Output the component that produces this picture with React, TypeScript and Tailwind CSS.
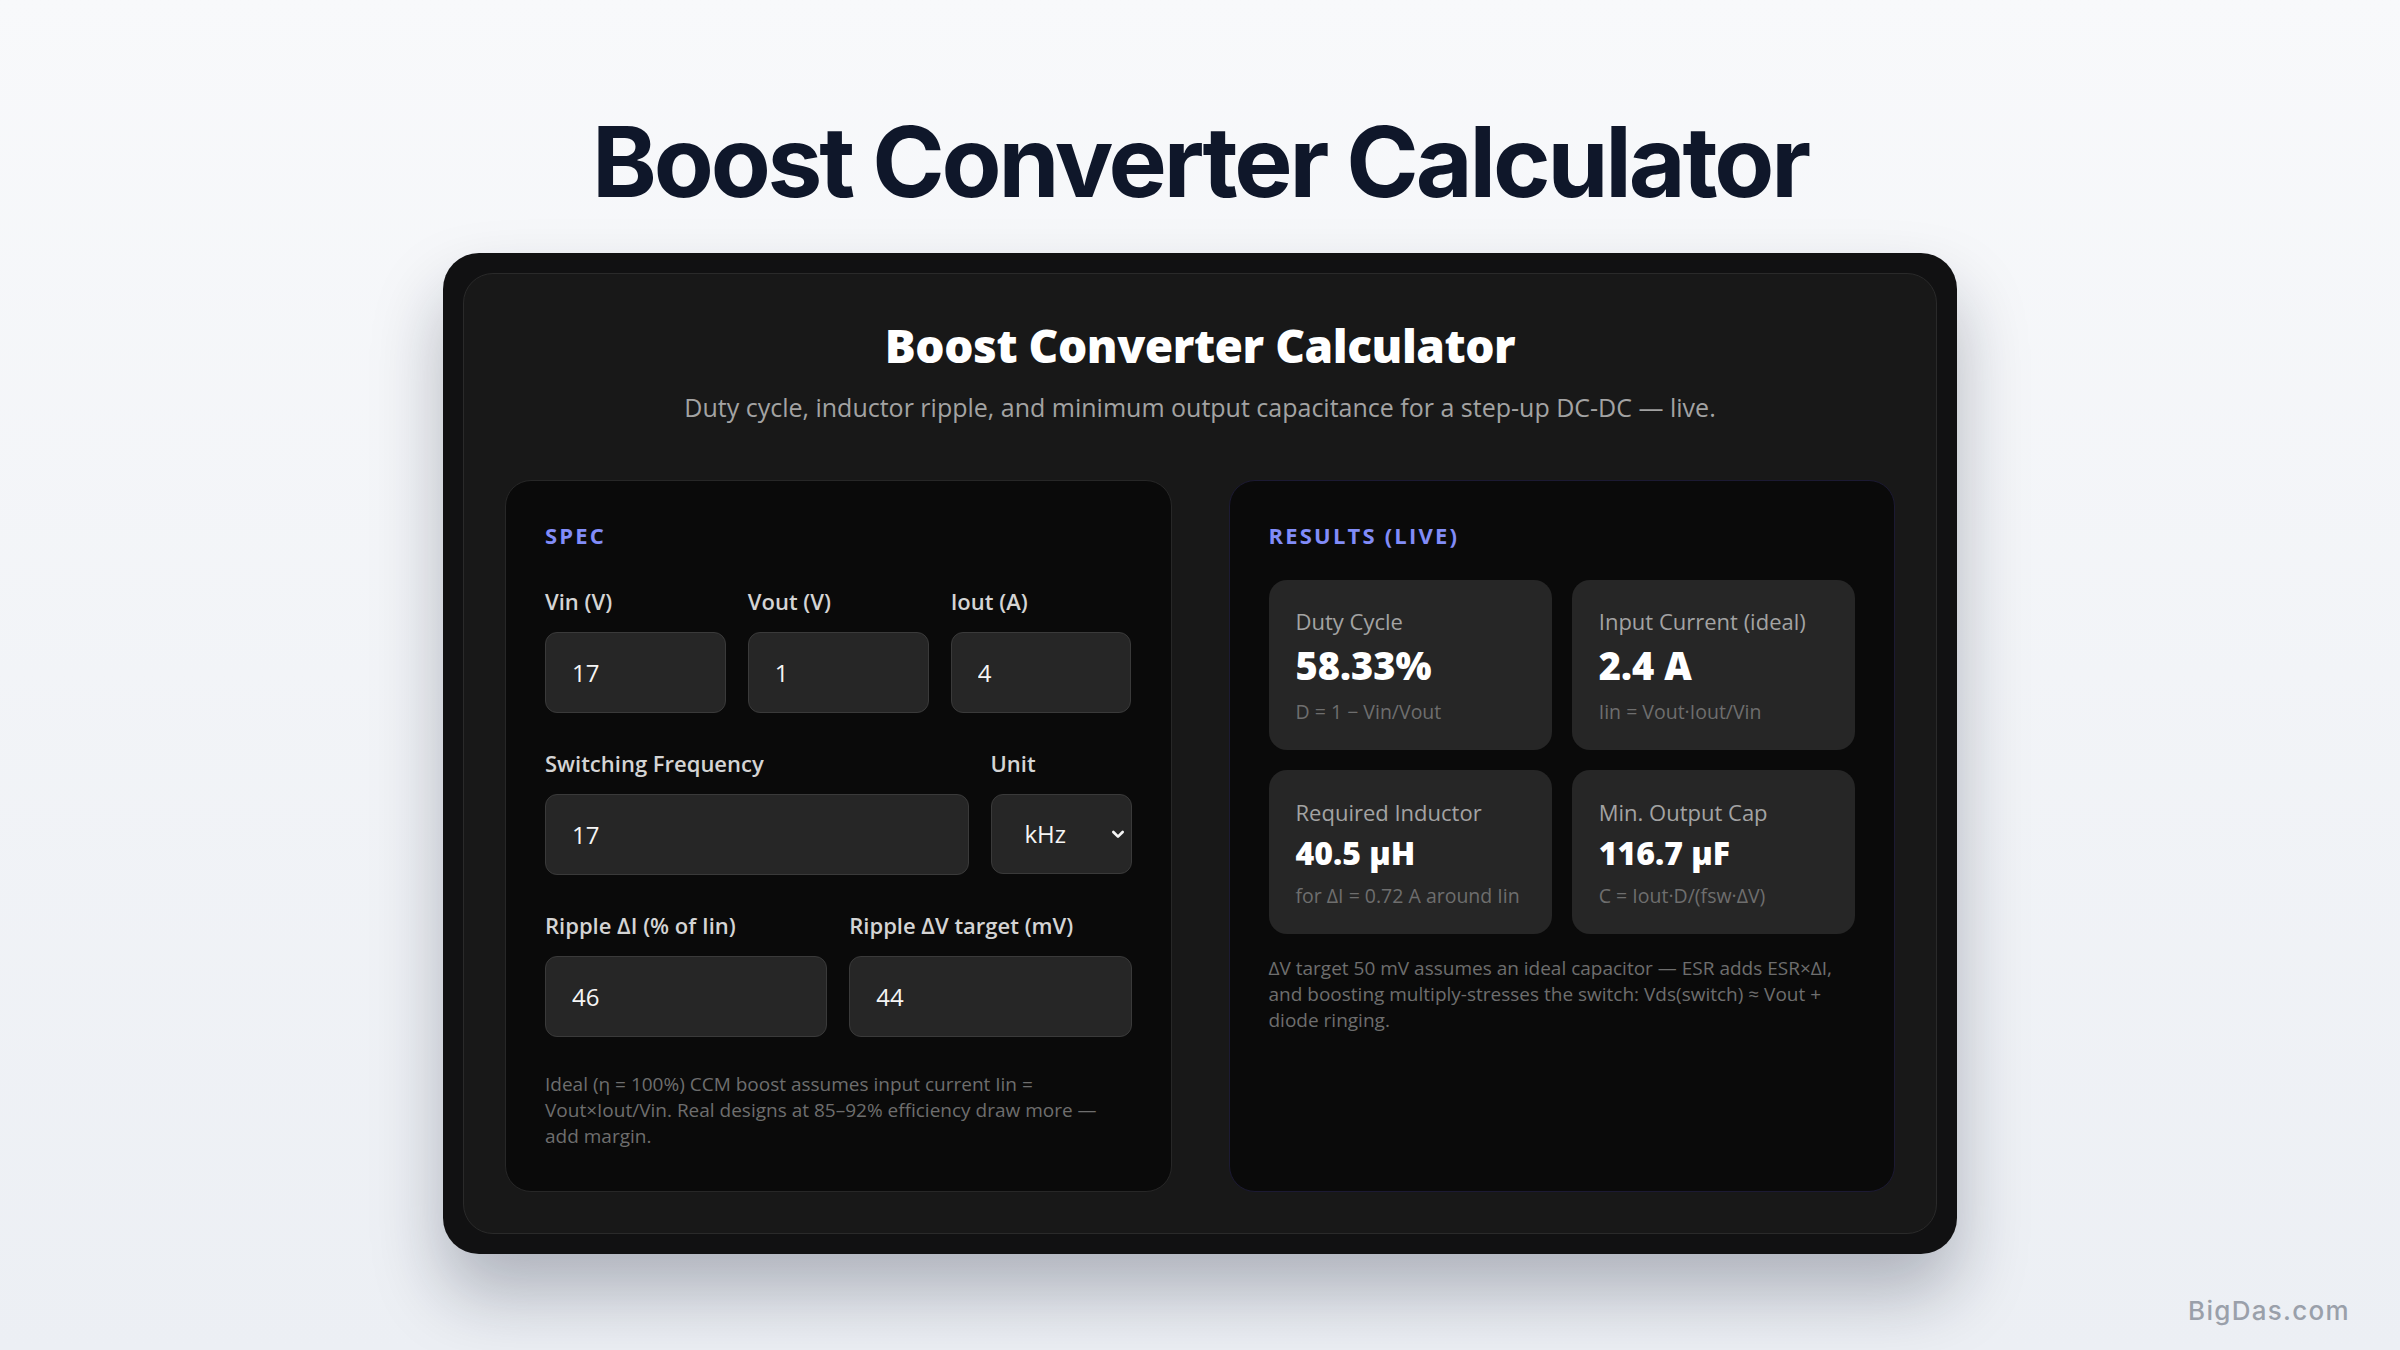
import React from "react";

const body = { fontFamily: "'Open Sans', 'Noto Sans', sans-serif" } as const;

function Field({ label, value, className = "" }: { label: string; value: string; className?: string }) {
  return (
    <div className={className}>
      <div className="text-[22px] leading-[30px] font-semibold text-[#d4d4d4] mb-[16px]">{label}</div>
      <input
        readOnly
        value={value}
        className="w-full h-[81px] rounded-[12px] bg-[#262626] border-[1.5px] border-[#3a3a3a] pl-[26px] text-[24px] text-[#f5f5f5] outline-none"
        style={body}
      />
    </div>
  );
}

function Result({
  label,
  value,
  sub,
  size,
  pt,
}: {
  label: string;
  value: string;
  sub: string;
  size: "lg" | "md";
  pt: string;
}) {
  return (
    <div className={`rounded-[18px] bg-[#262626] pl-[27px] pr-[16px] pb-[25px] ${pt}`}>
      <div className="text-[22px] leading-[30px] text-[#a3a3a3]">{label}</div>
      <div
        className={
          size === "lg"
            ? "mt-[7px] text-[38px] leading-[44px] font-extrabold text-white"
            : "mt-[7px] text-[32px] leading-[38px] font-extrabold text-white"
        }
      >
        {value}
      </div>
      <div
        className={
          size === "lg"
            ? "mt-[12px] text-[19.5px] leading-[26px] text-[#6e6e6e]"
            : "mt-[11px] text-[19.5px] leading-[26px] text-[#6e6e6e]"
        }
      >
        {sub}
      </div>
    </div>
  );
}

export default function App() {
  return (
    <div className="relative min-h-[1350px] w-full bg-linear-to-b from-[#f8f9fb] to-[#eceff4] pt-[113px] overflow-hidden">
      <h1
        className="text-center text-[98px] leading-none font-bold tracking-[-0.032em] text-[#0f172a]"
        style={{ fontFamily: "Inter, 'Noto Sans', sans-serif" }}
      >
        Boost Converter Calculator
      </h1>

      <div className="mx-auto mt-[42px] w-[1514px] rounded-[36px] bg-[#111112] p-[20px] shadow-[0_40px_70px_rgba(15,23,42,0.28)]">
        <div className="rounded-[30px] border border-[#2a2a2a] bg-[#181818] px-[41px] pt-[44px] pb-[41px]" style={body}>
          <h2 className="text-center text-[46px] leading-[55px] font-extrabold tracking-[-0.01em] text-white">
            Boost Converter Calculator
          </h2>
          <p className="mt-[16px] text-center text-[25px] leading-[36px] text-[#a3a3a3]">
            Duty cycle, inductor ripple, and minimum output capacitance for a step-up DC-DC — live.
          </p>

          <div className="mt-[55px] grid grid-cols-2 gap-[57px]">
            {/* SPEC */}
            <div className="rounded-[26px] border border-[#272727] bg-[#0a0a0a] px-[39px] pt-[39px] pb-[42px]">
              <div className="text-[22px] leading-[30px] font-bold tracking-[0.1em] text-[#818cf8]">SPEC</div>

              <div className="mt-[36px] grid grid-cols-3 gap-[22px]">
                <Field label="Vin (V)" value="17" />
                <Field label="Vout (V)" value="1" />
                <Field label="Iout (A)" value="4" />
              </div>

              <div className="mt-[35px] flex gap-[22px]">
                <Field label="Switching Frequency" value="17" className="flex-1" />
                <div className="w-[141px]">
                  <div className="text-[22px] leading-[30px] font-semibold text-[#d4d4d4] mb-[16px]">Unit</div>
                  <div className="flex h-[80px] items-center justify-between rounded-[12px] bg-[#262626] border-[1.5px] border-[#3a3a3a] pl-[33px] pr-[5px]">
                    <span className="text-[24px] text-[#f5f5f5]">kHz</span>
                    <svg width="16" height="16" viewBox="0 0 24 24" fill="none" stroke="#f5f5f5" strokeWidth="4" strokeLinecap="round" strokeLinejoin="round">
                      <path d="M5 9l7 7 7-7" />
                    </svg>
                  </div>
                </div>
              </div>

              <div className="mt-[35px] grid grid-cols-2 gap-[22px]">
                <Field label="Ripple ΔI (% of Iin)" value="46" />
                <Field label="Ripple ΔV target (mV)" value="44" />
              </div>

              <p className="mt-[34px] text-[19px] leading-[26px] text-[#6e6e6e]">
                Ideal (η = 100%) CCM boost assumes input current Iin =<br />
                Vout×Iout/Vin. Real designs at 85–92% efficiency draw more —<br />
                add margin.
              </p>
            </div>

            {/* RESULTS */}
            <div className="rounded-[26px] border border-[#1c1a33] bg-[#0a0a0a] px-[39px] pt-[39px] pb-[42px]">
              <div className="text-[22px] leading-[30px] font-bold tracking-[0.1em] text-[#818cf8]">RESULTS (LIVE)</div>
              <div className="mt-[30px] grid grid-cols-2 gap-[20px]">
                <Result label="Duty Cycle" value="58.33%" sub="D = 1 − Vin/Vout" size="lg" pt="pt-[26px]" />
                <Result label="Input Current (ideal)" value="2.4 A" sub="Iin = Vout·Iout/Vin" size="lg" pt="pt-[26px]" />
                <Result label="Required Inductor" value="40.5 µH" sub="for ΔI = 0.72 A around Iin" size="md" pt="pt-[27px]" />
                <Result label="Min. Output Cap" value="116.7 µF" sub="C = Iout·D/(fsw·ΔV)" size="md" pt="pt-[27px]" />
              </div>
              <p className="mt-[21px] text-[19px] leading-[26px] text-[#6e6e6e]">
                ΔV target 50 mV assumes an ideal capacitor — ESR adds ESR×ΔI,<br />
                and boosting multiply-stresses the switch: Vds(switch) ≈ Vout +<br />
                diode ringing.
              </p>
            </div>
          </div>
        </div>
      </div>

      <div
        className="absolute right-[50px] bottom-[20px] text-[26px] font-medium tracking-[0.05em] text-[#9aa0aa]"
        style={{ fontFamily: "Inter, 'Noto Sans', sans-serif" }}
      >
        BigDas.com
      </div>
    </div>
  );
}
